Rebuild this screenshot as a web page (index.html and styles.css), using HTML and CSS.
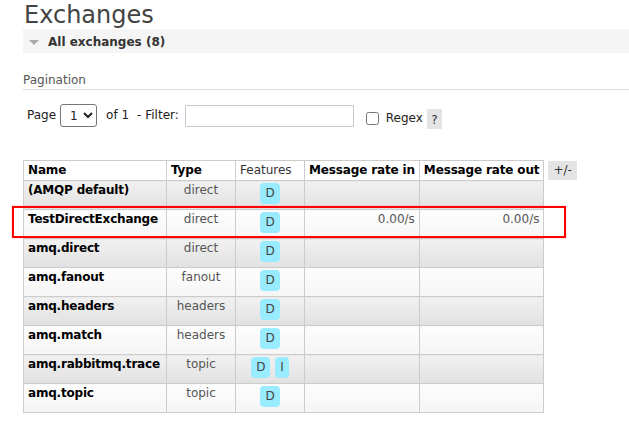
FILE: index.html
```html
<!DOCTYPE html>
<html lang="en">
<head>
<meta charset="utf-8">
<title>Exchanges</title>
<link rel="stylesheet" href="styles.css">
</head>
<body>
<div class="page">
  <h1 class="title">Exchanges</h1>
  <div class="section">
    <h2 class="section-head"><span class="caret"></span>All exchanges (8)</h2>
    <h3 class="subhead">Pagination</h3>
    <div class="pager">
      <span class="lbl">Page</span>
      <select class="page-select"><option>1</option></select>
      <span class="lbl of">of 1</span>
      <span class="lbl filter">- Filter:</span>
      <input class="filter-input" type="text">
      <span class="regex-group">
        <input class="regex-box" type="checkbox">
        <span class="lbl regex">Regex</span>
        <span class="help">?</span>
      </span>
    </div>
    <table class="list">
      <thead>
        <tr>
          <th class="c-name">Name</th>
          <th class="c-type">Type</th>
          <th class="c-feat plain">Features</th>
          <th class="c-in">Message rate in</th>
          <th class="c-out">Message rate out</th>
          <th class="plus-minus"><span>+/-</span></th>
        </tr>
      </thead>
      <tbody>
        <tr class="alt1">
          <td class="name">(AMQP default)</td>
          <td class="type">direct</td>
          <td class="feat"><span class="badge">D</span></td>
          <td class="rate"></td>
          <td class="rate"></td>
        </tr>
        <tr class="alt2">
          <td class="name">TestDirectExchange</td>
          <td class="type">direct</td>
          <td class="feat"><span class="badge">D</span></td>
          <td class="rate">0.00/s</td>
          <td class="rate">0.00/s</td>
        </tr>
        <tr class="alt1">
          <td class="name">amq.direct</td>
          <td class="type">direct</td>
          <td class="feat"><span class="badge">D</span></td>
          <td class="rate"></td>
          <td class="rate"></td>
        </tr>
        <tr class="alt2">
          <td class="name">amq.fanout</td>
          <td class="type">fanout</td>
          <td class="feat"><span class="badge">D</span></td>
          <td class="rate"></td>
          <td class="rate"></td>
        </tr>
        <tr class="alt1">
          <td class="name">amq.headers</td>
          <td class="type">headers</td>
          <td class="feat"><span class="badge">D</span></td>
          <td class="rate"></td>
          <td class="rate"></td>
        </tr>
        <tr class="alt2">
          <td class="name">amq.match</td>
          <td class="type">headers</td>
          <td class="feat"><span class="badge">D</span></td>
          <td class="rate"></td>
          <td class="rate"></td>
        </tr>
        <tr class="alt1">
          <td class="name">amq.rabbitmq.trace</td>
          <td class="type">topic</td>
          <td class="feat"><span class="badge">D</span> <span class="badge">I</span></td>
          <td class="rate"></td>
          <td class="rate"></td>
        </tr>
        <tr class="alt2">
          <td class="name">amq.topic</td>
          <td class="type">topic</td>
          <td class="feat"><span class="badge">D</span></td>
          <td class="rate"></td>
          <td class="rate"></td>
        </tr>
      </tbody>
    </table>
  </div>
</div>
<div class="highlight"></div>
</body>
</html>
```

FILE: styles.css
```css
html, body {
  margin: 0;
  padding: 0;
  background: #fff;
}

body {
  position: relative;
  font-family: "DejaVu Sans", Verdana, sans-serif;
  font-size: 12px;
  line-height: 15px;
  color: #333;
}

.page {
  padding-left: 23px;
}

.title {
  margin: 2px 0 0 1px;
  font-size: 24px;
  line-height: 27px;
  font-weight: normal;
  color: #444;
}

.section-head {
  margin: 0;
  box-sizing: border-box;
  height: 24px;
  padding: 2px 0 0 6px;
  display: flex;
  align-items: center;
  background: #f5f5f5;
  font-size: 12px;
  line-height: 15px;
  font-weight: bold;
  color: #333;
}

.caret {
  width: 0;
  height: 0;
  border-left: 5px solid transparent;
  border-right: 5px solid transparent;
  border-top: 5px solid #aaa;
  margin-right: 9px;
}

.subhead {
  margin: 20px 0 0;
  padding-bottom: 1px;
  border-bottom: 1px solid #ddd;
  font-size: 12px;
  line-height: 15px;
  font-weight: normal;
  color: #555;
}

.pager {
  display: flex;
  align-items: center;
  height: 23px;
  margin-top: 14px;
  padding-left: 4px;
  color: #222;
}

.page-select {
  box-sizing: border-box;
  width: 37px;
  height: 23px;
  margin: 0 0 0 4px;
  padding: 0 0 0 5px;
  font-family: "DejaVu Sans", Verdana, sans-serif;
  font-size: 12px;
  color: #222;
  border: 1px solid #767676;
  border-radius: 3px;
  background: #fff;
}

.of {
  margin-left: 9px;
}

.filter {
  margin-left: 8px;
}

.filter-input {
  box-sizing: border-box;
  width: 169px;
  height: 22px;
  margin: 0 0 0 6px;
  padding: 0 3px;
  border: 1px solid #c8c8c8;
  border-radius: 1px;
  font-family: "DejaVu Sans", Verdana, sans-serif;
  font-size: 12px;
  background: #fff;
}

.regex-group {
  display: flex;
  align-items: center;
  margin-top: 6px;
}

.regex-box {
  width: 13px;
  height: 13px;
  margin: 0 0 0 12px;
}

.regex {
  margin-left: 7px;
}

.help {
  box-sizing: border-box;
  width: 15px;
  height: 20px;
  margin-left: 4px;
  padding-top: 2px;
  line-height: 18px;
  text-align: center;
  background: #e4e4e4;
  color: #334;
}

.list {
  border-collapse: collapse;
  margin-top: 33px;
}

.list th,
.list td {
  border: 1px solid #ccc;
  vertical-align: top;
  text-align: left;
  line-height: 15px;
  white-space: nowrap;
}

.list th {
  padding: 2px 4px;
  background: #fff;
  color: #000;
  font-weight: bold;
  letter-spacing: -0.15px;
}

.list th.plain {
  font-weight: normal;
  color: #333;
  letter-spacing: 0;
}

.list td {
  padding: 2px 4px 5px;
}

.c-name { width: 134px; }
.c-type { width: 60px; }
.c-feat { width: 60px; }
.c-in { width: 105px; }
.c-out { width: 115px; }

.list th.plus-minus {
  border: none;
  background: none;
  padding: 0 0 0 4px;
  letter-spacing: 0;
}

.plus-minus span {
  display: inline-block;
  vertical-align: top;
  height: 19px;
  line-height: 19px;
  padding: 0 5px;
  background: #e4e4e4;
  font-weight: normal;
  color: #333;
}

.alt1 td {
  background: linear-gradient(#f1f1f1, #e1e1e1);
}

.alt2 td {
  background: linear-gradient(#fdfdfd, #f5f5f5);
}

.list td.name {
  font-weight: bold;
  color: #000;
  letter-spacing: -0.2px;
}

.list td.type {
  text-align: center;
  color: #555;
}

.list td.feat {
  text-align: center;
}

.list td.rate {
  text-align: right;
  color: #555;
}

.badge {
  display: inline-block;
  vertical-align: top;
  height: 21px;
  line-height: 21px;
  padding: 0 5px;
  border-radius: 4px;
  background: #99ebff;
  color: #444;
}

.badge + .badge {
  margin-left: 1px;
}

.highlight {
  position: absolute;
  left: 12px;
  top: 206px;
  width: 550px;
  height: 28px;
  border: 2px solid #f00;
  box-shadow: 0 0 1px rgba(255, 0, 0, 0.5);
}
```
